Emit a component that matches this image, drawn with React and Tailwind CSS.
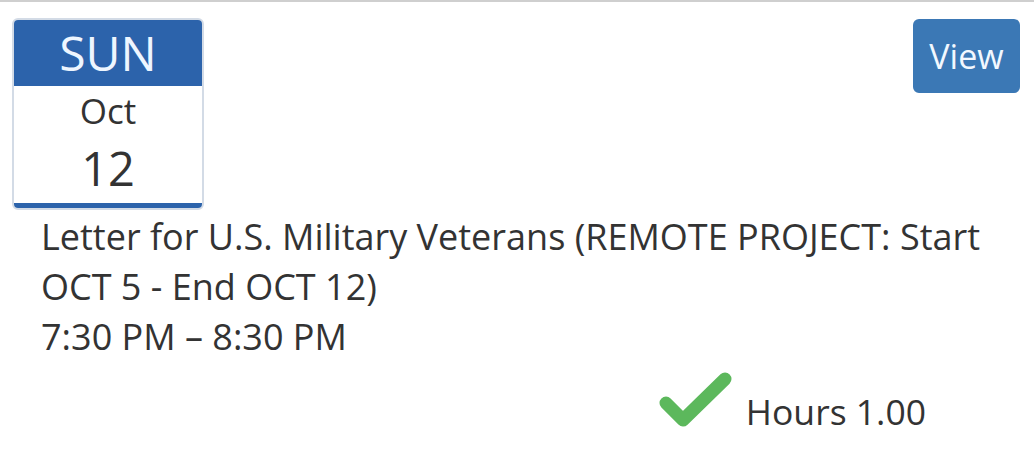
import React from "react";

function Check() {
  return (
    <svg width="76" height="58" viewBox="0 0 76 58" className="shrink-0">
      <path d="M8 31 L25 48 L67 7" fill="none" stroke="#5cb85c" strokeWidth="13" strokeLinecap="round" strokeLinejoin="round" />
    </svg>
  );
}

export default function App() {
  return (
    <div className="w-[1034px] h-[454px] bg-white border-t-2 border-[#cfcfcf] text-[#333] overflow-hidden" style={{ fontFamily: '"Open Sans", sans-serif' }}>
      <div className="flex justify-between items-start pl-[12px] pr-[14px] pt-[16px]">
        <div className="w-[192px] h-[192px] rounded-[6px] border-2 border-[#d3dbe6] overflow-hidden flex flex-col bg-white">
          <div className="bg-[#2c63ab] h-[66px] flex items-center justify-center text-[#eef6ff] text-[48px] leading-none">SUN</div>
          <div className="flex-1 flex flex-col items-center">
            <div className="text-[35px] leading-none mt-[7px]">Oct</div>
            <div className="text-[47px] leading-none mt-[17px]">12</div>
          </div>
          <div className="h-[5px] bg-[#2c63ab]" />
        </div>
        <button className="mt-[1px] w-[107px] h-[74px] rounded-[6px] bg-[#3b78b5] text-[#f2f8ff] text-[34px] flex items-center justify-center">View</button>
      </div>
      <div className="pl-[41px] pr-[40px] mt-[2px] text-[36px] leading-[50px]">
        <div>Letter for U.S. Military Veterans (REMOTE PROJECT: Start OCT 5 - End OCT 12)</div>
        <div>7:30 PM – 8:30 PM</div>
      </div>
      <div className="flex justify-end items-center pr-[108px] mt-[10px] gap-[12px]">
        <Check />
        <div className="text-[35.5px] leading-none mt-[22px]">Hours 1.00</div>
      </div>
    </div>
  );
}
